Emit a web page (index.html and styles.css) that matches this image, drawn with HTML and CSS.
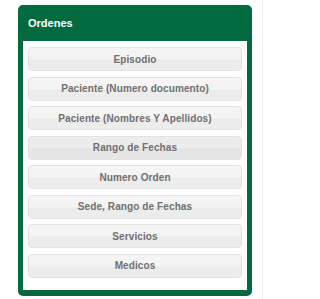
FILE: index.html
```html
<!DOCTYPE html>
<html>
<head>
<meta charset="utf-8">
<link rel="stylesheet" href="styles.css">
</head>
<body>
<div class="page">
  <div class="panel">
    <div class="panel-heading">Ordenes</div>
    <div class="panel-body">
      <button class="btn">Episodio</button>
      <button class="btn">Paciente (Numero documento)</button>
      <button class="btn">Paciente (Nombres Y Apellidos)</button>
      <button class="btn btn-active">Rango de Fechas</button>
      <button class="btn">Numero Orden</button>
      <button class="btn">Sede, Rango de Fechas</button>
      <button class="btn">Servicios</button>
      <button class="btn">Medicos</button>
    </div>
  </div>
</div>
</body>
</html>
```

FILE: styles.css
```css
html, body {
  margin: 0;
  padding: 0;
  background: #ffffff;
  font-family: "Liberation Sans", Arial, sans-serif;
}
.page {
  width: 263px;
  height: 299px;
  box-sizing: border-box;
  border-right: 1px solid #efefef;
  padding: 5px 0 0 18px;
}
.panel {
  width: 234px;
  box-sizing: border-box;
  background: #036a3f;
  border-radius: 5px;
  padding: 0 5px 6px;
}
.panel-heading {
  height: 36px;
  display: flex;
  align-items: center;
  padding-left: 5px;
  color: #ffffff;
  font-weight: bold;
  font-size: 11px;
}
.panel-body {
  background: #ffffff;
  padding: 6px 5px 12px;
  display: flex;
  flex-direction: column;
  gap: 5.5px;
}
.btn {
  height: 24px;
  margin: 0;
  padding: 0;
  border: 1px solid #e2e2e2;
  border-radius: 4px;
  background: linear-gradient(to bottom, #f5f5f5 0%, #f3f3f3 50%, #ebebeb 55%, #ededed 100%);
  color: #707070;
  font-family: "Liberation Sans", Arial, sans-serif;
  font-weight: bold;
  font-size: 10px;
  text-align: center;
  letter-spacing: 0.1px;
}
.btn-active {
  background: linear-gradient(to bottom, #ededed 0%, #ebebeb 50%, #e4e4e4 55%, #e6e6e6 100%);
}
```
